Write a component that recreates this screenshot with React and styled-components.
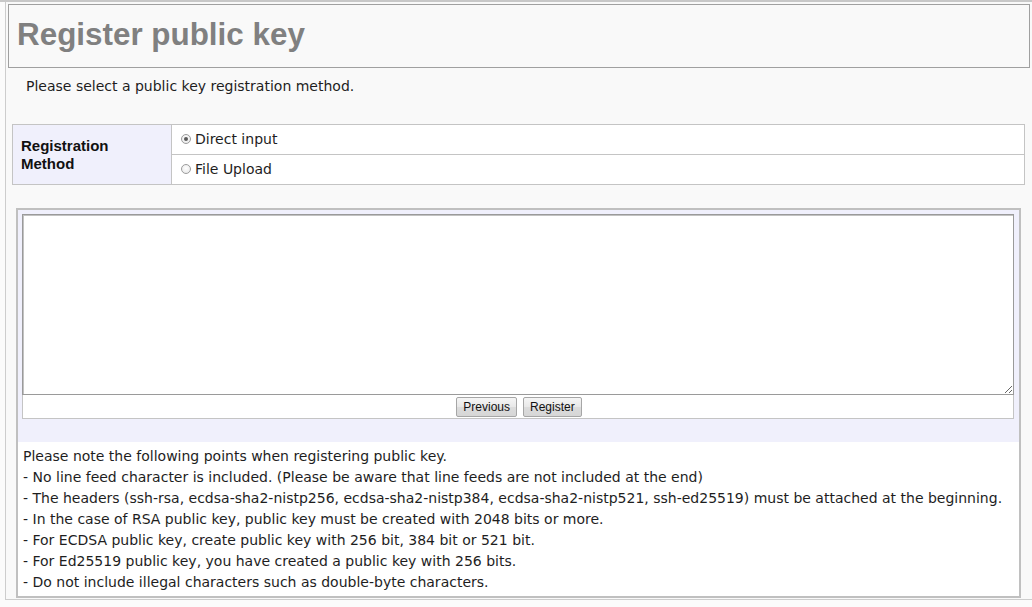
import React from "react";
import styled, { createGlobalStyle } from "styled-components";

const GlobalStyle = createGlobalStyle`
  html, body { margin: 0; padding: 0; background: #fbfbfb; }
  body { font-family: "DejaVu Sans", Verdana, sans-serif; color: #1e1e1e; }
  * { box-sizing: border-box; }
`;

const lavender = "#f0f0fc";

const Page = styled.div`
  border-top: 2px solid #c8c8c8;
  height: 607px;
  overflow: hidden;
`;

const Frame = styled.div`
  margin-left: 5px;
  border-left: 1px solid #cdcdcd;
  border-bottom: 1px solid #cdcdcd;
  background: #f9f9f9;
  padding: 2px 0 0 2px;
`;

const Header = styled.div`
  height: 64px;
  margin-right: 2px;
  border: 1px solid #a0a0a0;
  display: flex;
  align-items: center;
  padding: 0 0 2px 8px;
`;

const Title = styled.h1`
  margin: 0;
  font-family: "Liberation Sans", Arial, sans-serif;
  font-weight: bold;
  font-size: 31.4px;
  color: #808080;
`;

const Intro = styled.p`
  margin: 8px 0 0 18px;
  font-size: 14px;
  line-height: 21px;
`;

const MethodTable = styled.div`
  display: grid;
  grid-template-columns: 159px 1fr;
  margin: 27px 7px 0 4px;
  border: 1px solid #c4c4c4;
  background: #fff;
`;

const LabelCell = styled.div`
  grid-row: span 2;
  background: ${lavender};
  border-right: 1px solid #c4c4c4;
  display: flex;
  align-items: center;
  padding: 0 0 0 8px;
  font-family: "Liberation Sans", Arial, sans-serif;
  font-weight: bold;
  font-size: 15px;
  line-height: 17.5px;
  color: #111;
`;

const OptionCell = styled.label`
  height: ${(p) => (p.$last ? "29px" : "30px")};
  display: flex;
  align-items: center;
  gap: 4px;
  padding: 0 0 1px 9px;
  font-size: 14px;
  border-bottom: ${(p) => (p.$last ? "none" : "1px solid #c4c4c4")};
`;

const Radio = styled.span`
  width: 10px;
  height: 10px;
  border-radius: 50%;
  border: 1px solid #9c9c9c;
  background: radial-gradient(circle at 50% 40%, #ffffff 0%, #e4e4e4 100%);
  display: flex;
  align-items: center;
  justify-content: center;
  &::after {
    content: "";
    width: 4px;
    height: 4px;
    border-radius: 50%;
    background: ${(p) => (p.$checked ? "#5a5a5a" : "transparent")};
  }
`;

const KeyBox = styled.div`
  margin: 23px 11px 1px 8px;
  border: 2px solid #c0c0c0;
`;

const EditArea = styled.div`
  background: ${lavender};
  padding: 4px 5px 23px 4px;
`;

const KeyInput = styled.textarea`
  display: block;
  width: 100%;
  height: 181px;
  margin: 0;
  border: 1px solid #9a9a9a;
  box-shadow: inset 1px 1px 0 #c2c2c2;
  background: #fff;
  resize: both;
  outline: none;
  font-family: "Liberation Mono", monospace;
  font-size: 13px;
`;

const ButtonRow = styled.div`
  height: 24px;
  border: 1px solid #c4c4c4;
  border-top: none;
  background: #fff;
  display: flex;
  align-items: center;
  justify-content: center;
  gap: 6px;
  padding: 1px 0 0 2px;
`;

const Button = styled.button`
  height: 20px;
  padding: 0 6px;
  border: 1px solid #a6a6a6;
  border-radius: 2px;
  background: linear-gradient(#f5f5f5, #e8e8e8 50%, #dcdcdc 51%, #d6d6d6);
  font-family: "Liberation Sans", Arial, sans-serif;
  font-size: 12px;
  color: #111;
  cursor: pointer;
`;

const Notes = styled.div`
  background: #fff;
  padding: 4px 5px 3px;
  font-size: 14px;
  line-height: 21px;
`;

const NoteLine = styled.div`
  white-space: nowrap;
`;

const notes = [
  "Please note the following points when registering public key.",
  "- No line feed character is included. (Please be aware that line feeds are not included at the end)",
  "- The headers (ssh-rsa, ecdsa-sha2-nistp256, ecdsa-sha2-nistp384, ecdsa-sha2-nistp521, ssh-ed25519) must be attached at the beginning.",
  "- In the case of RSA public key, public key must be created with 2048 bits or more.",
  "- For ECDSA public key, create public key with 256 bit, 384 bit or 521 bit.",
  "- For Ed25519 public key, you have created a public key with 256 bits.",
  "- Do not include illegal characters such as double-byte characters.",
];

export default function App() {
  return (
    <>
      <GlobalStyle />
      <Page>
        <Frame>
          <Header>
            <Title>Register public key</Title>
          </Header>
          <Intro>Please select a public key registration method.</Intro>
          <MethodTable>
            <LabelCell>
              Registration
              <br />
              Method
            </LabelCell>
            <OptionCell>
              <Radio $checked />
              Direct input
            </OptionCell>
            <OptionCell $last>
              <Radio />
              File Upload
            </OptionCell>
          </MethodTable>
          <KeyBox>
            <EditArea>
              <KeyInput spellCheck={false} />
              <ButtonRow>
                <Button type="button">Previous</Button>
                <Button type="button">Register</Button>
              </ButtonRow>
            </EditArea>
            <Notes>
              {notes.map((n) => (
                <NoteLine key={n}>{n}</NoteLine>
              ))}
            </Notes>
          </KeyBox>
        </Frame>
      </Page>
    </>
  );
}
